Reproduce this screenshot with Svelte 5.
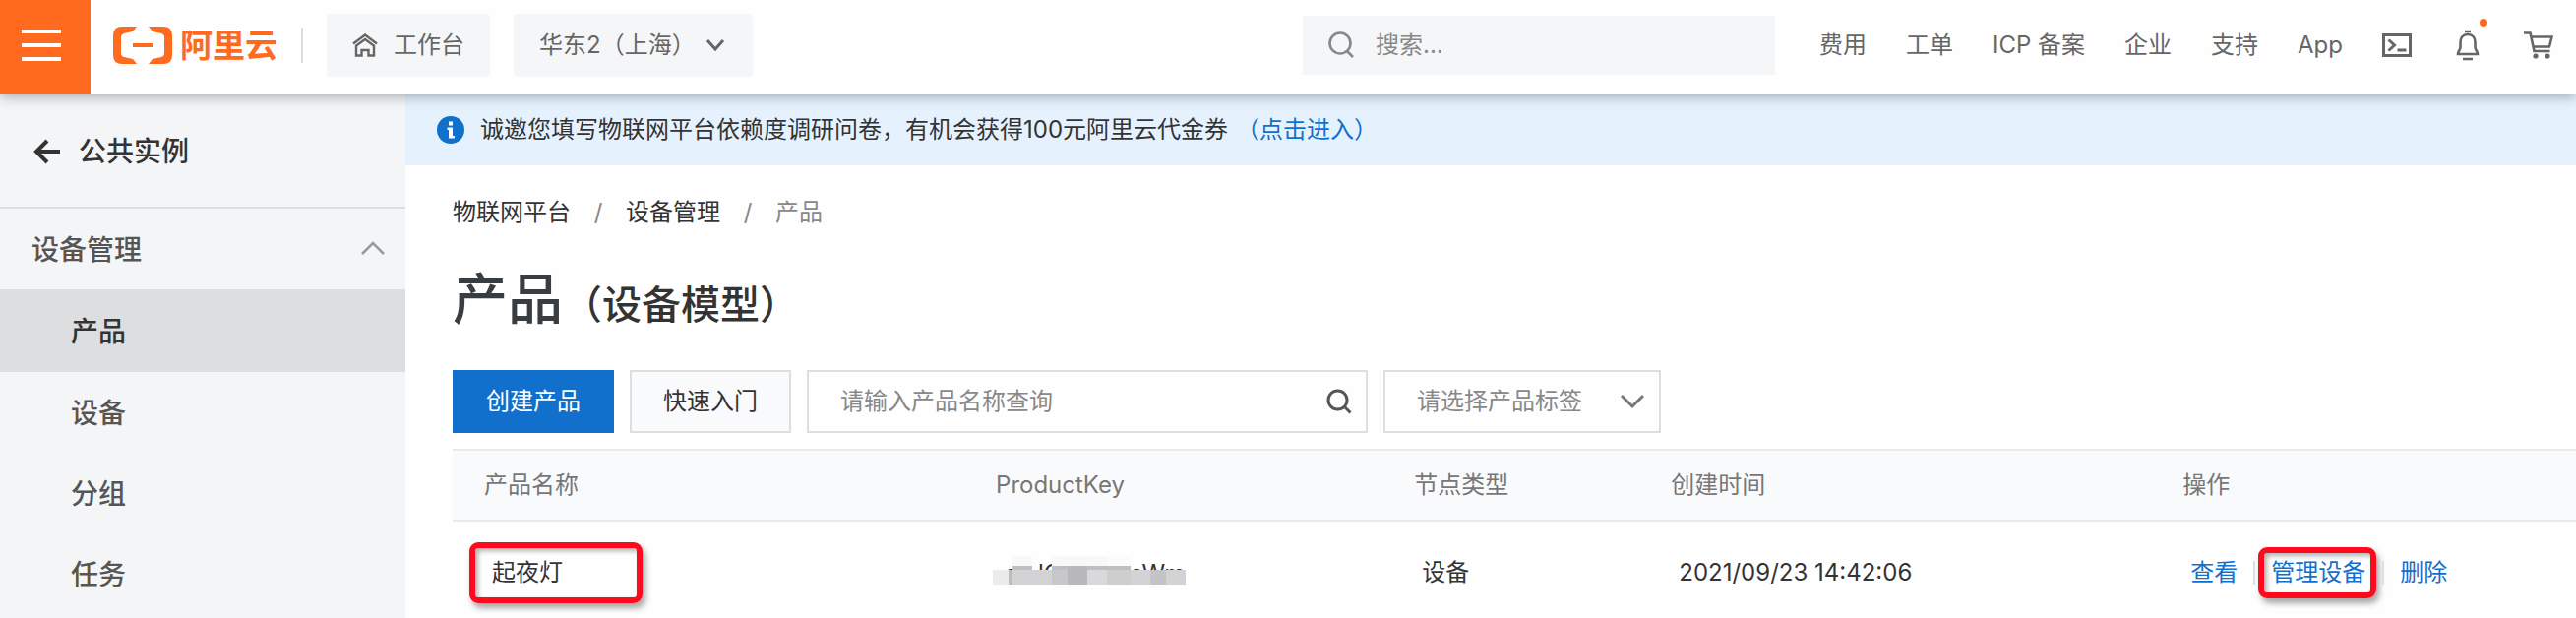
<script>
  const topLinks = ['费用', '工单', 'ICP 备案', '企业', '支持', 'App'];
  const menu = ['产品', '设备', '分组', '任务'];
  const active = '产品';
</script>

<svelte:head><title>产品</title></svelte:head>

<header class="topbar">
  <button class="burger" aria-label="菜单"><span></span><span></span><span></span></button>
  <a class="logo" href="#home">
    <svg width="60" height="38" viewBox="0 0 60 38" aria-hidden="true">
      <path d="M24 0H9Q0 0 0 9v20Q0 38 9 38h15l-4-5-9-2q-3-1-3-4V11q0-3 3-4l9-2z" />
      <path d="M36 0h15q9 0 9 9v20q0 9-9 9H36l4-5 9-2q3-1 3-4V11q0-3-3-4l-9-2z" />
      <path d="M20 17h20v4H20z" />
    </svg>
    <span>阿里云</span>
  </a>
  <i class="bar"></i>
  <button class="chip">
    <svg width="26" height="24" viewBox="0 0 26 24" fill="none" stroke="#666" stroke-width="2.4" aria-hidden="true">
      <path d="M1 10.500 13 1.500l12 9" />
      <path d="M4 22.500V12.500L13 6l9 6.500v10h-5.500V17h-7v5.500z" />
    </svg>
    工作台
  </button>
  <button class="chip region">
    华东2（上海）
    <svg width="20" height="14" viewBox="0 0 20 14" fill="none" stroke="#666" stroke-width="3" aria-hidden="true"><path d="m2 2 8 9 8-9" /></svg>
  </button>
  <label class="search">
    <svg width="26" height="28" viewBox="0 0 26 28" fill="none" stroke="#888" stroke-width="2.6" aria-hidden="true"><circle cx="12" cy="12" r="10.5" /><path d="m19 20 6 6" /></svg>
    <input type="text" placeholder="搜索..." aria-label="搜索" />
  </label>
  <nav class="links">
    {#each topLinks as l}<a href="#top">{l}</a>{/each}
  </nav>
  <div class="tools">
    <button aria-label="终端">
      <svg width="30" height="24" viewBox="0 0 30 24" fill="none" stroke="#666" stroke-width="3" aria-hidden="true"><path d="M1.5 1.5h27v21h-27zM6.500 6.500l6 5.500-6 5.500M15.500 17h9" /></svg>
    </button>
    <button aria-label="通知" class="bell">
      <svg width="30" height="32" viewBox="0 0 30 32" fill="none" stroke="#666" stroke-width="2.6" aria-hidden="true"><path d="M12 2h6M15 5c-5 0-7.500 3.500-7.500 8v5c0 3-2.500 4-2.500 7h20c0-3-2.500-4-2.500-7v-5c0-4.500-2.500-8-7.500-8zM10 30h10" /></svg>
      <b></b>
    </button>
    <button aria-label="购物车">
      <svg width="30" height="28" viewBox="0 0 30 28" fill="none" stroke="#666" stroke-width="2.6" aria-hidden="true"><path d="M0 1.500h6.500L10.500 20h16M7.500 5.500H28.500L26 15.500H9.500" /><circle cx="12" cy="25" r="2.600" fill="#666" stroke="none" /><circle cx="24" cy="25" r="2.600" fill="#666" stroke="none" /></svg>
    </button>
  </div>
</header>

<div class="body">
  <aside>
    <a class="back" href="#back">
      <svg width="28" height="26" viewBox="0 0 28 26" fill="none" stroke="#333" stroke-width="4" aria-hidden="true"><path d="M14 2 3 13l11 11M3 13h24" /></svg>
      公共实例
    </a>
    <button class="group">
      设备管理
      <svg width="26" height="16" viewBox="0 0 26 16" fill="none" stroke="#999" stroke-width="2.600" aria-hidden="true"><path d="M2 14 13 3l11 11" /></svg>
    </button>
    <nav>
      {#each menu as m}<a href="#menu" class:active={m === active}>{m}</a>{/each}
    </nav>
  </aside>

  <main>
    <div class="notice">
      <svg width="28" height="28" viewBox="0 0 28 28" aria-hidden="true">
        <circle cx="14" cy="14" r="14" fill="#1170cc" />
        <path d="M12 5.500h4v4h-4zM10.500 11.500H16v8.500h2v2.500h-6V14h-1.500z" fill="#fff" />
      </svg>
      <span>诚邀您填写物联网平台依赖度调研问卷，有机会获得100元阿里云代金券</span>
      <a href="#survey">（点击进入）</a>
    </div>
    <div class="page">
      <nav class="crumbs" aria-label="位置">
        <a href="#iot">物联网平台</a><i>/</i><a href="#devices">设备管理</a><i>/</i><span>产品</span>
      </nav>
      <h1>产品<small>（设备模型）</small></h1>
      <div class="actions">
        <button class="btn primary">创建产品</button>
        <button class="btn">快速入门</button>
        <label class="field">
          <input type="text" placeholder="请输入产品名称查询" aria-label="产品名称" />
          <svg width="26" height="26" viewBox="0 0 26 26" fill="none" stroke="#555" stroke-width="3" aria-hidden="true"><circle cx="11.500" cy="11.500" r="9.500" /><path d="m18 18 6.500 6.500" /></svg>
        </label>
        <label class="field tag">
          <select aria-label="产品标签"><option>请选择产品标签</option></select>
          <svg width="26" height="16" viewBox="0 0 26 16" fill="none" stroke="#777" stroke-width="3" aria-hidden="true"><path d="m2 2 11 11L24 2" /></svg>
        </label>
      </div>
      <table>
        <colgroup><col class="c1" /><col class="c2" /><col class="c3" /><col class="c4" /><col /></colgroup>
        <thead><tr><th>产品名称</th><th>ProductKey</th><th>节点类型</th><th>创建时间</th><th>操作</th></tr></thead>
        <tbody>
          <tr>
            <td><span class="mark name">起夜灯</span></td>
            <td>
              <span class="key">
                <svg width="196" height="34" viewBox="0 0 196 34" aria-hidden="true">
                  <text x="12" y="26">a</text><text x="46" y="26">lC</text><text x="139" y="26">cWm</text>
                  <path d="M20 0h20v10H20zM60 0h56v10H60z" fill="#f8f8fa" />
                  <path d="M116 0h24v10h-24z" fill="#fbfbfc" />
                  <path d="M0 14h196v15H0z" fill="#d3d3d6" />
                  <path d="M0 14h16v15H0z" fill="#ececef" />
                  <path d="M16 14h4v15h-4z" fill="#bcbcbe" />
                  <path d="M20 10h20v4H20zM60 10h16v4H60zM96 10h44v4H96z" fill="#bfbfc1" />
                  <path d="M60 14h16v15H60z" fill="#c8c8cb" />
                  <path d="M76 10h20v19H76z" fill="#b9b9bb" />
                  <path d="M96 14h20v15H96z" fill="#d9d9dc" />
                  <path d="M116 14h24v15h-24z" fill="#cececf" />
                  <path d="M160 14h16v15h-16z" fill="#c4c4c7" />
                </svg>
              </span>
            </td>
            <td>设备</td>
            <td>2021/09/23 14:42:06</td>
            <td>
              <span class="ops">
                <a href="#view">查看</a><i></i><a class="mark manage" href="#manage">管理设备</a><i></i><a href="#delete">删除</a>
              </span>
            </td>
          </tr>
        </tbody>
      </table>
    </div>
  </main>
</div>

<style>
  :global(body) { background: #fefefe; color: #333; font: 24px/36px Inter, "Noto Sans CJK SC", sans-serif; overflow: hidden; }
  * { box-sizing: border-box; }
  a { color: inherit; text-decoration: none; }
  button, input, select { font: inherit; color: inherit; border: 0; background: none; padding: 0; margin: 0; outline: 0; }
  svg { display: block; flex: none; }
  i { font-style: normal; }

  .topbar { position: relative; z-index: 1; display: flex; align-items: center; height: 96px; padding-right: 23px; background: #fefefe; color: #666; box-shadow: 0 2px 12px rgba(0, 0, 0, .32); white-space: nowrap; }
  .burger { align-self: stretch; width: 92px; background: #ff6a1f; display: flex; flex-direction: column; align-items: center; justify-content: center; gap: 10px; padding: 0 8px 4px 0; }
  .burger span { width: 40px; height: 4px; background: #fff; }
  .logo { display: flex; align-items: center; gap: 8px; margin-left: 23px; padding-bottom: 4px; color: #ff6a1f; font-size: 33px; font-weight: 700; }
  .logo svg { fill: #ff6a1f; }
  .bar { width: 2px; height: 36px; margin: 0 24px 4px; background: #ddd; }
  .chip { display: flex; align-items: center; gap: 16px; height: 64px; padding: 0 26px; margin: 0 24px 4px 0; border-radius: 4px; background: #f4f6f8; }
  .region { gap: 10px; padding-right: 28px; }
  .search { display: flex; align-items: center; gap: 22px; width: 480px; height: 60px; margin: 0 45px 4px auto; padding: 0 26px; background: #f4f6f8; }
  .search input { flex: 1; min-width: 0; }
  input::placeholder { color: #888; opacity: 1; }
  .links { display: flex; gap: 40px; padding-bottom: 4px; }
  .tools { display: flex; align-items: center; gap: 42px; margin-left: 40px; padding-bottom: 4px; }
  .bell { position: relative; }
  .bell b { position: absolute; right: -5px; top: -11px; width: 8px; height: 8px; border-radius: 50%; background: #ff6a1f; }

  .body { display: flex; min-height: calc(100vh - 96px); }
  aside { flex: none; width: 412px; background: #f4f5f7; font-size: 28px; font-weight: 500; color: #555; }
  .back { display: flex; align-items: center; gap: 18px; height: 116px; padding: 2px 0 0 34px; color: #333; border-bottom: 2px solid #dddee0; }
  .group { display: flex; align-items: center; justify-content: space-between; width: 100%; height: 82px; padding: 2px 20px 0 32px; font-weight: 500; }
  .group svg { margin-bottom: 4px; }
  aside nav a { display: flex; align-items: center; height: 82px; padding: 2px 0 0 72px; }
  aside nav .active { height: 84px; background: #dddee0; color: #333; }

  main { flex: 1; min-width: 0; }
  .notice { display: flex; align-items: center; height: 72px; padding-left: 32px; background: #e5f2fe; }
  .notice span { margin: 0 8px 0 16px; }
  .notice a, .ops a { color: #1170cc; }
  .page { padding: 30px 0 0 48px; }
  .crumbs { display: flex; }
  .crumbs i { width: 56px; text-align: center; color: #888; }
  .crumbs span { color: #888; }
  h1 { margin: 30px 0 0; font-size: 56px; line-height: 80px; font-weight: 500; color: #373d41; }
  small { font-size: 40px; color: #333; }
  .actions { display: flex; gap: 16px; margin-top: 26px; }
  .btn { height: 64px; padding: 0 32px; border: 2px solid #dedee0; background: #f9fafc; }
  .primary { border-color: #1170cc; background: #1170cc; color: #fff; }
  .field { display: flex; align-items: center; width: 570px; height: 64px; padding: 0 14px 0 32px; border: 2px solid #dddee0; color: #888; }
  .field input, .field select { flex: 1; min-width: 0; appearance: none; }
  .tag { width: 282px; }

  table { width: 100%; margin-top: 16px; border-collapse: separate; border-spacing: 0; table-layout: fixed; text-align: left; }
  .c1 { width: 24.1%; }
  .c2 { width: 19.7%; }
  .c3 { width: 12.1%; }
  .c4 { width: 24.1%; }
  th { height: 74px; padding: 0 0 0 32px; font-weight: 400; color: #777; background: #f9fafc; border: solid #e8e9eb; border-width: 2px 0; }
  td { height: 104px; padding: 0 0 0 40px; white-space: nowrap; }
  .mark { display: inline-flex; align-items: center; border: 6px solid #ff0a1c; border-radius: 9px; box-shadow: 3px 5px 6px rgba(0, 0, 0, .35), inset 3px 3px 5px rgba(0, 0, 0, .3); }
  .name { width: 176px; height: 62px; margin-left: -23px; padding-left: 17px; }
  .key { display: block; margin-left: -11px; }
  .key text { font: 24px Inter, sans-serif; fill: #333; }
  .ops { display: flex; align-items: center; }
  .ops i { width: 2px; height: 24px; margin-left: 16px; background: #dddee0; }
  .ops .manage { height: 52px; padding: 0 5px 0 7px; margin-left: 3px; }
  .ops .manage + i { margin: 0 16px 0 6px; }
</style>
